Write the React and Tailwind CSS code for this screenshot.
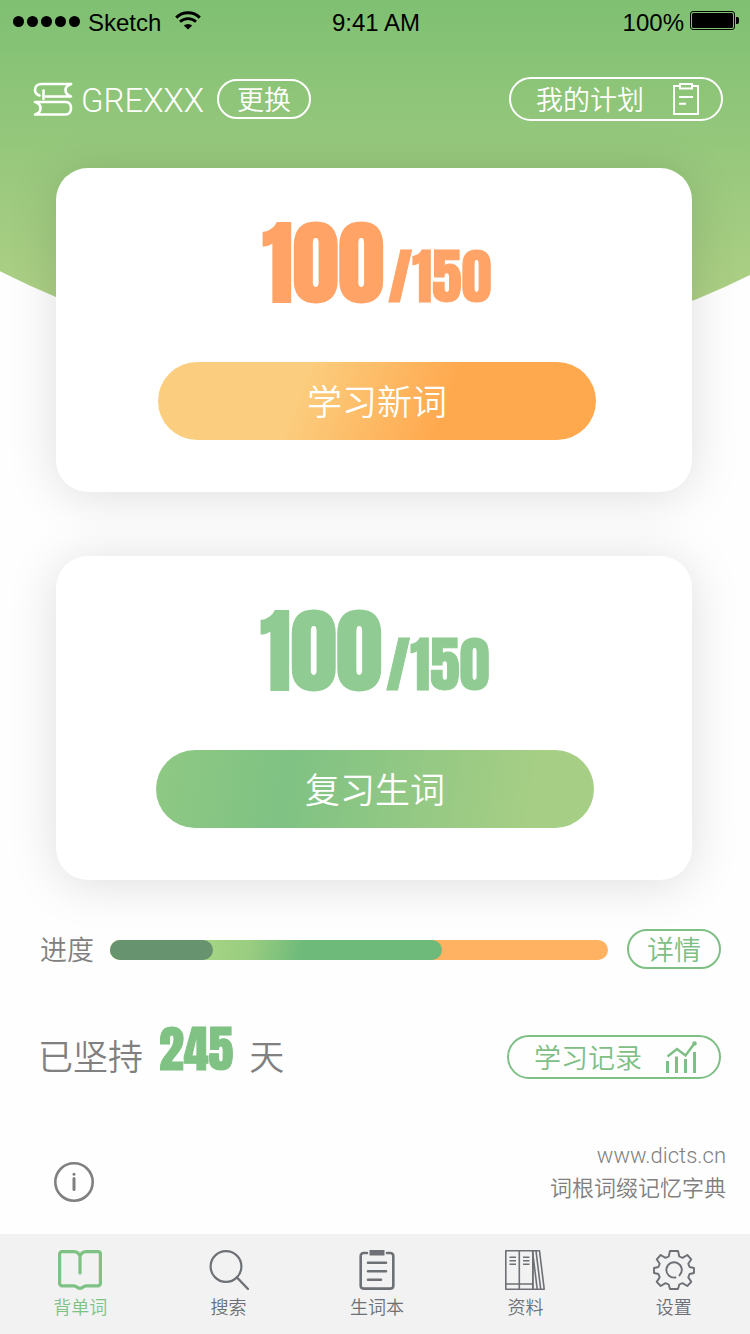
function WifiIcon() {
  return (
    <svg className="h-5 w-7" viewBox="0 0 28 20" fill="none" stroke="#000" aria-hidden="true">
      <path d="M2.2 6.6A17 17 0 0 1 25.8 6.6" strokeWidth="3" />
      <path d="M6 10.8A11.5 11.5 0 0 1 22 10.8" strokeWidth="2.8" />
      <path d="M14 18.6L9.8 14.6A6 6 0 0 1 18.2 14.6Z" fill="#000" stroke="none" />
    </svg>
  );
}

function BatteryIcon() {
  return (
    <svg className="h-5 w-[49px]" viewBox="0 0 49 20" aria-hidden="true">
      <rect x="0.5" y="0.5" width="44" height="18" rx="2.5" fill="none" stroke="#000" />
      <rect x="2" y="2" width="41" height="15" rx="1.5" />
      <path d="M46 6h1.2a1.8 1.8 0 0 1 1.8 1.8v3.4a1.8 1.8 0 0 1-1.8 1.8H46z" />
    </svg>
  );
}

function BooksIcon() {
  return (
    <svg className="h-[34px] w-10" viewBox="0 0 40 34" fill="none" stroke="#fff" strokeWidth="2.6" strokeLinecap="round" strokeLinejoin="round" aria-hidden="true">
      <path d="M38 2H8.500C4.500 2 2 4.300 2 8c0 3 1.500 4.500 4.500 5.500" />
      <path d="M38 2c-3 1-5.500 3-5.500 6.200 0 3.300 2.500 5 5.500 6.300H13" />
      <path d="M10.500 8.500v8.500" />
      <path d="M2 20h30.500c3.800 0 5.500 2.500 5.500 6.200s-2 6.300-5.500 6.300H2c3.500-1 5.500-3 5.500-6.300S5.500 21 2 20z" />
    </svg>
  );
}

function PlanIcon() {
  return (
    <svg className="h-8 w-[26px]" viewBox="0 0 26 32" fill="none" stroke="#fff" strokeWidth="2" aria-hidden="true">
      <path d="M7 3H1v28h24V3h-6" />
      <path d="M7 1h12v4.500H7z" />
      <path d="M6 14h14M6 20.800h7" />
    </svg>
  );
}

function RecordIcon() {
  return (
    <svg className="h-8 w-8" viewBox="0 0 32 32" fill="none" stroke="#7ebf85" aria-hidden="true">
      <path d="M2.500 20v12M11.500 15.500V32M20.500 18v14M29.500 11v21" strokeWidth="3" />
      <path d="M2.500 15.500l9.500-7.500 8.500 6.500L29 3" strokeWidth="2.400" />
      <circle cx="29.500" cy="2.500" r="2.300" fill="#7ebf85" stroke="none" />
    </svg>
  );
}

function OpenBookIcon() {
  return (
    <svg className="h-10 w-11" viewBox="0 0 44 40" fill="none" stroke="currentColor" strokeWidth="3.2" strokeLinecap="round" strokeLinejoin="round" aria-hidden="true">
      <path d="M22 23V6.500C21 3 19 1.600 16 1.600H4A2.400 2.400 0 0 0 1.600 4v29.500A2.400 2.400 0 0 0 4 35.900h12c2.500 0 3.500 2.500 6 2.500s3.500-2.500 6-2.500h12a2.400 2.400 0 0 0 2.400-2.400V4A2.400 2.400 0 0 0 40 1.600H28C25 1.600 23 3 22 6.500" />
    </svg>
  );
}

function SearchIcon() {
  return (
    <svg className="h-10 w-10" viewBox="0 0 40 40" fill="none" stroke="currentColor" strokeWidth="2.200" strokeLinecap="round" aria-hidden="true">
      <circle cx="17" cy="16.500" r="15.400" />
      <path d="M28 27.500L39 39" strokeWidth="2.400" />
    </svg>
  );
}

function NotebookIcon() {
  return (
    <svg className="h-10 w-9" viewBox="0 0 36 40" fill="none" stroke="currentColor" strokeWidth="2.600" strokeLinecap="round" aria-hidden="true">
      <path d="M8 3H4.500A2.800 2.800 0 0 0 1.700 5.800v30a2.800 2.800 0 0 0 2.800 2.800h27a2.800 2.800 0 0 0 2.800-2.800v-30A2.800 2.800 0 0 0 31.500 3H28" />
      <path d="M10.500 0h15v5.500h-15z" fill="currentColor" stroke="none" />
      <path d="M9 12.800h18M9 21.200h18M9 29.800h13" />
    </svg>
  );
}

function LibraryIcon() {
  return (
    <svg className="h-10 w-10" viewBox="0 0 40 40" fill="none" stroke="currentColor" strokeWidth="1.600" strokeLinejoin="round" aria-hidden="true">
      <path d="M.8.8h13.500v38.400H.8zM14.300.8h13.500v38.400H14.300zM.8 34h27" />
      <path d="M4.500 7.300H11M4.500 10.800H11M4.500 14.300H11M18 7.300h6.500M18 10.800h6.500M18 14.300h6.500" />
      <path d="M27.500.8H34.500L39.200 39.200H32.200zM31 .8l4.700 38.400M27.800 5v34.200h4.400" />
    </svg>
  );
}

function GearIcon() {
  return (
    <svg className="h-10 w-[42px]" viewBox="0 0 42 40" fill="none" stroke="currentColor" strokeWidth="1.900" strokeLinejoin="round" strokeLinecap="round" aria-hidden="true">
      <path d="M17 1h8l1.300 5.500 3.200 1.400L34.300 5l4 4.300-3 4.500 1.300 3.200 4.400 1v5l-4.400 1-1.300 3.400 3 4.500-4 4.100-4.800-2.900-3.200 1.400L25 39h-8l-1.300-4.500-3.200-1.400L7.700 36l-4-4.100 3-4.500L5.400 24 1 23v-5l4.400-1 1.300-3.200-3-4.500L7.700 5l4.800 2.900 3.200-1.400z" />
      <path d="M26.500 25.400A7.700 7.700 0 1 0 22.500 27.500" />
    </svg>
  );
}

function InfoIcon() {
  return (
    <svg className="size-10" viewBox="0 0 40 40" fill="none" stroke="#808080" aria-hidden="true">
      <circle cx="20" cy="20" r="18.700" strokeWidth="2.600" />
      <path d="M20 16.500v11" strokeWidth="3" strokeLinecap="round" />
      <circle cx="20" cy="12.300" r="1.500" fill="#808080" stroke="none" />
    </svg>
  );
}

function StudyCard({ done, total, label, tone, padding, button }) {
  return (
    <section className={`flex h-[324px] flex-col rounded-[32px] bg-white shadow-[0_4px_50px_rgba(0,0,0,0.13)] ${padding}`}>
      <p className={`flex h-[194px] items-baseline justify-center gap-1 pt-[30px] font-[Anton,'Roboto_Condensed',sans-serif] font-normal ${tone}`}>
        <span className="text-[92px] leading-[130px] [-webkit-text-stroke:2px_currentColor]">{done}</span>
        <span className="text-[60px] leading-[80px] [-webkit-text-stroke:1px_currentColor]">/{total}</span>
      </p>
      <button type="button" className={`h-[78px] rounded-full pb-0.5 text-[35px] text-white ${button}`}>
        {label}
      </button>
    </section>
  );
}

const tabs = [
  { label: "背单词", icon: OpenBookIcon, active: true },
  { label: "搜索", icon: SearchIcon },
  { label: "生词本", icon: NotebookIcon },
  { label: "资料", icon: LibraryIcon },
  { label: "设置", icon: GearIcon },
];

export default function App() {
  return (
    <div className="relative flex min-h-screen flex-col bg-[#fefefe] font-['Noto_Sans_CJK_SC',sans-serif] font-[350] text-[#808080]">
      <div className="absolute inset-x-0 top-0 h-[362px] bg-linear-to-b from-[#7fc073] to-[#b6d389] [clip-path:circle(836px_at_50.5%_-474px)]" />

      <div className="relative flex flex-1 flex-col">
        <div className="grid h-[42px] grid-cols-3 items-center pr-[11px] pl-[13px] font-['Liberation_Sans',sans-serif] text-2xl font-normal text-black">
          <div className="flex items-center">
            <div className="flex gap-[3px]">
              {[0, 1, 2, 3, 4].map((i) => (
                <span key={i} className="size-[11px] rounded-full bg-black" />
              ))}
            </div>
            <span className="mt-1 mr-[13px] ml-2">Sketch</span>
            <WifiIcon />
          </div>
          <span className="mt-1 text-center">9:41 AM</span>
          <div className="flex items-center justify-end gap-1.5">
            <span className="mt-1">100%</span>
            <BatteryIcon />
          </div>
        </div>

        <header className="mt-[35px] flex h-11 items-center justify-between pr-[27px] pl-[33px] text-white">
          <div className="flex items-center">
            <BooksIcon />
            <h1 className="mt-1 ml-2 font-[Roboto,sans-serif] text-[33px] font-light">GREXXX</h1>
            <button type="button" className="ml-[13px] h-10 w-[94px] rounded-full border-2 border-white text-[27px] leading-9">
              更换
            </button>
          </div>
          <button type="button" className="flex h-11 w-[214px] items-center justify-between rounded-full border-2 border-white pr-[22px] pl-[25px] text-[27px] leading-10">
            我的计划
            <PlanIcon />
          </button>
        </header>

        <main className="flex flex-1 flex-col">
          <div className="mt-[47px] flex flex-col gap-16 pr-[58px] pl-14">
            <StudyCard done={100} total={150} label="学习新词" tone="text-[#ffa366]" padding="pl-[102px] pr-24" button="bg-[linear-gradient(112deg,#fbce7f_32%,#ffa94f_65%)]" />
            <StudyCard done={100} total={150} label="复习生词" tone="text-[#90cb93]" padding="pl-[100px] pr-[98px]" button="bg-[linear-gradient(100deg,#8fc984_0%,#7fc283_30%,#a6ce85_85%)]" />
          </div>

          <div className="mt-[49px] flex h-10 items-center pr-[29px] pl-10">
            <span id="progress-label" className="text-[27px]">进度</span>
            <div role="progressbar" aria-labelledby="progress-label" aria-valuenow={67} className="mt-0.5 mr-[19px] ml-4 h-5 flex-1 rounded-full bg-[#ffb262]">
              <div className="h-full w-2/3 rounded-full bg-[linear-gradient(105deg,#a6d585_28%,#9acd80_42%,#6dba7a_58%)]">
                <div className="h-full w-[31%] rounded-full bg-[#67946f]" />
              </div>
            </div>
            <button type="button" className="h-10 w-[94px] rounded-full border-2 border-[#7ebf85] text-[27px] leading-9 text-[#7ebf85]">
              详情
            </button>
          </div>

          <div className="mt-[60px] flex h-12 items-center justify-between pr-[29px] pl-[38px]">
            <p className="flex items-baseline text-[35px]">
              已坚持
              <span className="mr-4 ml-4 font-[Anton,'Roboto_Condensed',sans-serif] text-[50px] leading-12 font-normal text-[#7fc283] [-webkit-text-stroke:1px_currentColor]">245</span>
              天
            </p>
            <button type="button" className="mt-2 flex h-11 w-[214px] items-center justify-between rounded-full border-2 border-[#7ebf85] pr-[22px] pl-[25px] text-[27px] leading-10 text-[#7ebf85]">
              学习记录
              <RecordIcon />
            </button>
          </div>

          <div className="mt-auto flex items-end justify-between pr-6 pb-8 pl-[54px]">
            <button type="button" aria-label="关于">
              <InfoIcon />
            </button>
            <div className="mb-0.5 flex flex-col items-end text-[22px]">
              <a href="http://www.dicts.cn" className="font-[Roboto,sans-serif] leading-8 font-light">www.dicts.cn</a>
              <p className="leading-7">词根词缀记忆字典</p>
            </div>
          </div>
        </main>

        <nav className="grid h-[100px] grid-cols-5 bg-[#f2f2f2] pr-0.5 pl-1.5">
          {tabs.map(({ label, icon: Icon, active }) => (
            <a key={label} href="#" aria-current={active ? "page" : undefined} className={`flex flex-col items-center pt-4 text-lg leading-8 ${active ? "text-[#7ec283]" : "text-[#6d7075]"}`}>
              <Icon />
              {label}
            </a>
          ))}
        </nav>
      </div>
    </div>
  );
}
